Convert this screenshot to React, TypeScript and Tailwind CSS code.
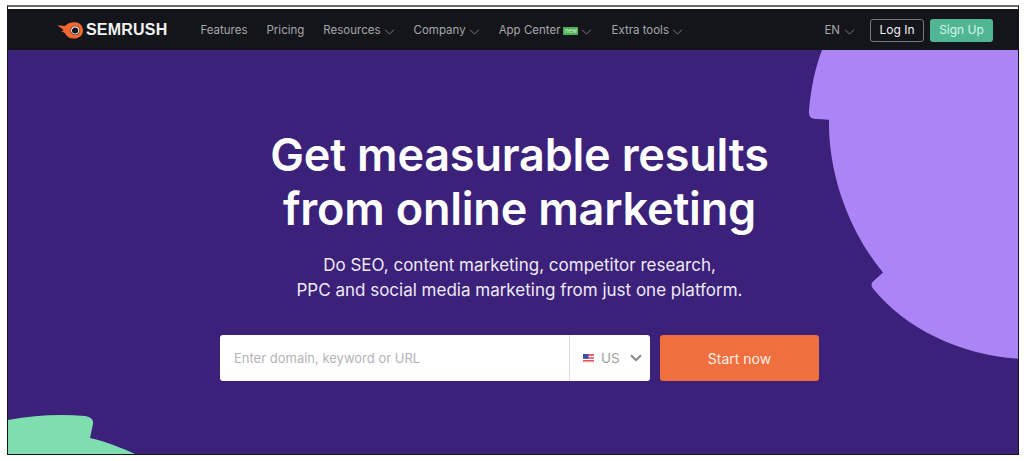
import React from 'react';

const navItems = [
  { label: 'Features', caret: false },
  { label: 'Pricing', caret: false },
  { label: 'Resources', caret: true },
  { label: 'Company', caret: true },
  { label: 'App Center', caret: true, badge: true },
  { label: 'Extra tools', caret: true },
];

const Caret: React.FC = () => (
  <svg width="11" height="6" viewBox="0 0 12 7" fill="none" stroke="#8b8c90" strokeWidth="1" className="mt-[2px]">
    <path d="M0.8 0.8 L6 6 L11.2 0.8" />
  </svg>
);

const Logo: React.FC = () => (
  <svg width="26" height="17" viewBox="0 0 26 17">
    <path
      d="M0 3.5 C3 3.2 6 3.6 8 4 C10 1.2 14 0 18 0.2 C23 0.6 26 4 26 8.5 C26 13.5 22 16.6 17 16.6 C12.5 16.6 9.8 14.4 8 11.2 C6.8 10.4 5.4 9.8 4 9.6 C5 9.2 6 8.8 6.6 8.2 C4.6 6 2.4 4.6 0 3.5 Z"
      fill="#f1672f"
    />
    <circle cx="18.2" cy="8.4" r="4.6" fill="#14151a" />
    <circle cx="18.2" cy="8.4" r="3.6" fill="none" stroke="#f4efe9" strokeWidth="1.2" />
    <circle cx="17.4" cy="8.8" r="2.4" fill="#14151a" />
  </svg>
);

const Flag: React.FC = () => (
  <svg width="11" height="9" viewBox="0 0 10 8">
    <rect width="10" height="8" fill="#e8505b" />
    <rect y="1.6" width="10" height="1.2" fill="#fff" />
    <rect y="4.2" width="10" height="1.2" fill="#fff" />
    <rect y="6.8" width="10" height="1.2" fill="#fff" />
    <rect width="5" height="4.2" fill="#3d4f9f" />
  </svg>
);

export default function App() {
  return (
    <div
      className="w-[1024px] h-[461px] bg-white overflow-hidden pt-[5px] pl-[7px] pr-[5px] pb-[6px]"
      style={{ fontFamily: 'Inter, "Noto Sans", sans-serif' }}
    >
      <div className="h-full flex flex-col border-l border-b border-r border-[#16161a] border-t-2 border-t-[#6b6b6e]">
        <div className="h-[2px] bg-white" />

        {/* Nav */}
        <header className="h-[41px] bg-[#14151a] flex items-center pt-[1px] pl-[49px] pr-[25px] shrink-0">
          <div className="flex items-center gap-[3px] mr-[33px]">
            <Logo />
            <span className="text-[16px] font-bold tracking-[0.2px] text-[#f2f2f2]" style={{ fontFamily: '"Liberation Sans", sans-serif' }}>
              SEMRUSH
            </span>
          </div>
          <nav className="flex items-center gap-[19px] mt-[1px] text-[11.5px] text-[#a6a7aa]">
            {navItems.map((item) => (
              <div key={item.label} className="flex items-center gap-[3px]">
                <span>{item.label}</span>
                {item.badge && (
                  <span className="w-[15px] h-[8px] bg-[#4fae54] text-[6px] leading-[8px] text-center text-[#d9f5dc]">new</span>
                )}
                {item.caret && <Caret />}
              </div>
            ))}
          </nav>
          <div className="ml-auto flex items-center">
            <div className="flex items-center gap-[4px] mt-[1px] text-[11.5px] text-[#a6a7aa] mr-[15px]">
              <span>EN</span>
              <Caret />
            </div>
            <button className="w-[54px] h-[23px] rounded-[3px] border border-[#77787c] text-[12px] text-[#f2f2f2] mr-[6px]">Log In</button>
            <button className="w-[63px] h-[23px] rounded-[3px] bg-[#4fb593] text-[12px] text-[#d8f5ea]">Sign Up</button>
          </div>
        </header>

        {/* Hero */}
        <main className="relative flex-1 bg-[#3b2179] overflow-hidden flex flex-col items-center pl-[13px]">
          <svg className="absolute inset-0 w-full h-full" viewBox="8 50 1010 403" preserveAspectRatio="none">
            <path
              d="M822 50 C815 68 811 88 809 110 C808.6 115 810 118 814 118.6 L829 119.6 C828 175 850 232 883 272 L873 281 C871 283 871 285.6 873 288 C905 328 960 354 1018 358 L1018 50 Z"
              fill="#ab84f5"
            />
            <path
              d="M8 419 C35 414 60 413 85 415 C91 416 94 419 93 423 L90 437 C107 441 122 447 135 453 L8 453 Z"
              fill="#7fdeb0"
            />
          </svg>

          <div className="relative flex flex-col items-center mt-[78px]">
            <h1 className="text-[45px] leading-[54px] font-semibold text-white text-center tracking-[-0.2px]">
              Get measurable results
              <br />
              from online marketing
            </h1>
            <p className="mt-[17px] text-[17px] leading-[25px] text-[#eeeaf7] text-center">
              Do SEO, content marketing, competitor research,
              <br />
              PPC and social media marketing from just one platform.
            </p>
            <div className="mt-[32px] flex items-center gap-[10px]">
              <div className="w-[430px] h-[46px] bg-white rounded-[3px] flex items-center">
                <span className="flex-1 pl-[14px] pt-[1px] text-[13px] text-[#b4b4b8]">Enter domain, keyword or URL</span>
                <div className="w-[81px] h-full border-l border-[#dcdce2] flex items-center pl-[13px] gap-[7px]">
                  <Flag />
                  <span className="text-[13.5px] text-[#a0a0a6]">US</span>
                  <svg width="12" height="8" viewBox="0 0 12 8" fill="none" stroke="#86868c" strokeWidth="2" className="ml-[3px]">
                    <path d="M1 1.2 L6 6.2 L11 1.2" />
                  </svg>
                </div>
              </div>
              <button className="w-[159px] h-[46px] rounded-[3px] bg-[#f06f3e] text-[14px] text-[#fdeee6]">Start now</button>
            </div>
          </div>
        </main>
      </div>
    </div>
  );
}
